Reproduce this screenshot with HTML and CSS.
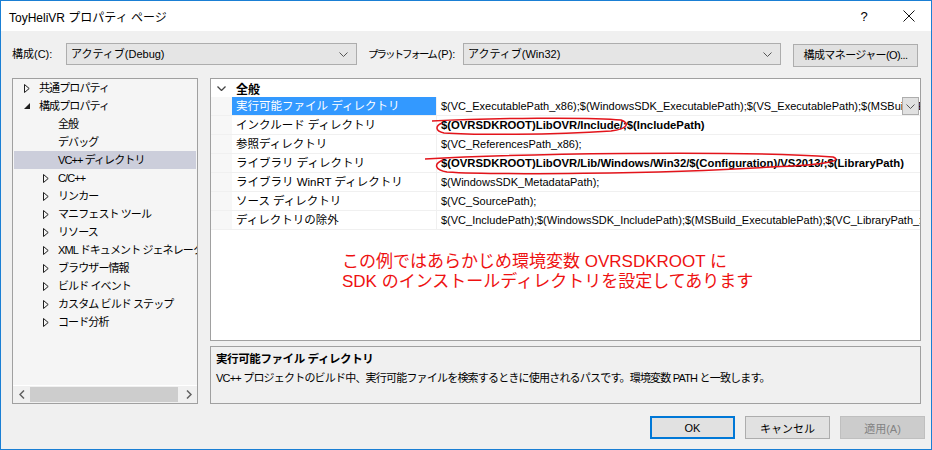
FILE: index.html
```html
<!DOCTYPE html>
<html lang="ja">
<head>
<meta charset="UTF-8"/>
<meta name="viewport" content="width=device-width, initial-scale=1.0"/>
<title>ToyHeliVR プロパティ ページ</title>
<link rel="stylesheet" href="styles.css">
</head>
<body>

<div class="window">

  <!-- TITLE BAR -->
  <div class="titlebar">
    <div class="title">ToyHeliVR プロパティ ページ</div>
    <div class="help">?</div>
    <div class="close">
      <svg width="12" height="12" viewBox="0 0 12 12"><path d="M0.5 0.5L11.5 11.5M11.5 0.5L0.5 11.5" stroke="#111" stroke-width="1"/></svg>
    </div>
  </div>

  <div class="content">

    <!-- CONFIG ROW -->
    <div class="config-row">
      <span class="label label-config">構成(C):</span>
      <div class="combo combo-config">
        <span>アクティブ(Debug)</span>
        <svg class="chev" width="9" height="5" viewBox="0 0 9 5"><path d="M0.5 0.5L4.5 4.5L8.5 0.5" fill="none" stroke="#555"/></svg>
      </div>
      <span class="label label-platform"><span class="kana">プラットフォーム</span>(P):</span>
      <div class="combo combo-platform">
        <span>アクティブ(Win32)</span>
        <svg class="chev" width="9" height="5" viewBox="0 0 9 5"><path d="M0.5 0.5L4.5 4.5L8.5 0.5" fill="none" stroke="#555"/></svg>
      </div>
      <button class="btn btn-manager">構成マネージャー(O)...</button>
    </div>

    <div class="main">

      <!-- TREE -->
      <div class="tree">
        <ul class="tree-list">
          <li class="node lvl1"><span class="twisty"><svg width="6" height="9" viewBox="0 0 6 9"><path d="M0.5 0.5L5.2 4.5L0.5 8.5Z" fill="none" stroke="#1e1e1e"/></svg></span>共通プロパティ</li>
          <li class="node lvl1"><span class="twisty"><svg width="6" height="6" viewBox="0 0 6 6"><path d="M6 0L6 6L0 6Z" fill="#1e1e1e"/></svg></span>構成プロパティ</li>
          <li class="node lvl2 leaf">全般</li>
          <li class="node lvl2 leaf">デバッグ</li>
          <li class="node lvl2 leaf selected">VC++ ディレクトリ</li>
          <li class="node lvl2"><span class="twisty"><svg width="6" height="9" viewBox="0 0 6 9"><path d="M0.5 0.5L5.2 4.5L0.5 8.5Z" fill="none" stroke="#1e1e1e"/></svg></span>C/C++</li>
          <li class="node lvl2"><span class="twisty"><svg width="6" height="9" viewBox="0 0 6 9"><path d="M0.5 0.5L5.2 4.5L0.5 8.5Z" fill="none" stroke="#1e1e1e"/></svg></span>リンカー</li>
          <li class="node lvl2"><span class="twisty"><svg width="6" height="9" viewBox="0 0 6 9"><path d="M0.5 0.5L5.2 4.5L0.5 8.5Z" fill="none" stroke="#1e1e1e"/></svg></span>マニフェスト ツール</li>
          <li class="node lvl2"><span class="twisty"><svg width="6" height="9" viewBox="0 0 6 9"><path d="M0.5 0.5L5.2 4.5L0.5 8.5Z" fill="none" stroke="#1e1e1e"/></svg></span>リソース</li>
          <li class="node lvl2"><span class="twisty"><svg width="6" height="9" viewBox="0 0 6 9"><path d="M0.5 0.5L5.2 4.5L0.5 8.5Z" fill="none" stroke="#1e1e1e"/></svg></span>XML ドキュメント ジェネレーター</li>
          <li class="node lvl2"><span class="twisty"><svg width="6" height="9" viewBox="0 0 6 9"><path d="M0.5 0.5L5.2 4.5L0.5 8.5Z" fill="none" stroke="#1e1e1e"/></svg></span>ブラウザー情報</li>
          <li class="node lvl2"><span class="twisty"><svg width="6" height="9" viewBox="0 0 6 9"><path d="M0.5 0.5L5.2 4.5L0.5 8.5Z" fill="none" stroke="#1e1e1e"/></svg></span>ビルド イベント</li>
          <li class="node lvl2"><span class="twisty"><svg width="6" height="9" viewBox="0 0 6 9"><path d="M0.5 0.5L5.2 4.5L0.5 8.5Z" fill="none" stroke="#1e1e1e"/></svg></span>カスタム ビルド ステップ</li>
          <li class="node lvl2"><span class="twisty"><svg width="6" height="9" viewBox="0 0 6 9"><path d="M0.5 0.5L5.2 4.5L0.5 8.5Z" fill="none" stroke="#1e1e1e"/></svg></span>コード分析</li>
        </ul>
        <div class="hscroll">
          <span class="sb-arrow"><svg width="6" height="9" viewBox="0 0 6 9"><path d="M5 0.5L1 4.5L5 8.5" fill="none" stroke="#606060" stroke-width="1.5"/></svg></span>
          <span class="sb-thumb"></span>
          <span class="sb-arrow"><svg width="6" height="9" viewBox="0 0 6 9"><path d="M1 0.5L5 4.5L1 8.5" fill="none" stroke="#606060" stroke-width="1.5"/></svg></span>
        </div>
      </div>

      <div class="right">

        <!-- PROPERTY GRID -->
        <div class="grid">
          <div class="grid-cat">
            <span class="cat-chev"><svg width="9" height="5" viewBox="0 0 9 5"><path d="M0.5 0.5L4.5 4.5L8.5 0.5" fill="none" stroke="#444" stroke-width="1.3"/></svg></span>
            <span class="cat-name">全般</span>
          </div>
          <div class="grid-row selected">
            <div class="gutter"></div>
            <div class="name">実行可能ファイル ディレクトリ</div>
            <div class="value">$(VC_ExecutablePath_x86);$(WindowsSDK_ExecutablePath);$(VS_ExecutablePath);$(MSBuild_ExecutablePath);$(FxCopDir);$(PATH);
              <span class="drop"><svg width="9" height="5" viewBox="0 0 9 5"><path d="M0.5 0.5L4.5 4.5L8.5 0.5" fill="none" stroke="#555"/></svg></span>
            </div>
          </div>
          <div class="grid-row">
            <div class="gutter"></div>
            <div class="name">インクルード ディレクトリ</div>
            <div class="value bold">$(OVRSDKROOT)LibOVR/Include/;$(IncludePath)</div>
          </div>
          <div class="grid-row">
            <div class="gutter"></div>
            <div class="name">参照ディレクトリ</div>
            <div class="value">$(VC_ReferencesPath_x86);</div>
          </div>
          <div class="grid-row">
            <div class="gutter"></div>
            <div class="name">ライブラリ ディレクトリ</div>
            <div class="value bold">$(OVRSDKROOT)LibOVR/Lib/Windows/Win32/$(Configuration)/VS2013/;$(LibraryPath)</div>
          </div>
          <div class="grid-row">
            <div class="gutter"></div>
            <div class="name">ライブラリ WinRT ディレクトリ</div>
            <div class="value">$(WindowsSDK_MetadataPath);</div>
          </div>
          <div class="grid-row">
            <div class="gutter"></div>
            <div class="name">ソース ディレクトリ</div>
            <div class="value">$(VC_SourcePath);</div>
          </div>
          <div class="grid-row">
            <div class="gutter"></div>
            <div class="name">ディレクトリの除外</div>
            <div class="value">$(VC_IncludePath);$(WindowsSDK_IncludePath);$(MSBuild_ExecutablePath);$(VC_LibraryPath_x86);</div>
          </div>

          <div class="note">
            <div>この例ではあらかじめ環境変数 OVRSDKROOT に</div>
            <div>SDK のインストールディレクトリを設定してあります</div>
          </div>

          <!-- hand-drawn red marks -->
          <svg class="marks" width="708" height="261" viewBox="0 0 708 261">
            <path d="M221 42 C280 39, 380 38, 410 41 C419 44, 417 50, 400 52 C340 56, 262 56, 233 54 C224 52, 224 47, 231 44" fill="none" stroke="#e3141b" stroke-width="1.5"/>
            <path d="M214 80 C300 75, 520 71, 622 78 C633 82, 612 86, 560 88 C450 95, 280 96, 236 93 C224 91, 222 85, 232 81" fill="none" stroke="#e3141b" stroke-width="1.5"/>
          </svg>
        </div>

        <!-- DESCRIPTION -->
        <div class="desc">
          <div class="desc-title">実行可能ファイル ディレクトリ</div>
          <div class="desc-text">VC++ プロジェクトのビルド中、実行可能ファイルを検索するときに使用されるパスです。環境変数 PATH と一致します。</div>
        </div>
      </div>
    </div>

    <!-- BUTTONS -->
    <div class="buttons">
      <button class="btn btn-ok">OK</button>
      <button class="btn">キャンセル</button>
      <button class="btn btn-disabled">適用(A)</button>
    </div>

  </div>
</div>

</body>
</html>
```

FILE: styles.css
```css
/* GLOBAL */
html,body {
  margin:0; padding:0; background:#f0f0f0; overflow:hidden;
  font-family:"Liberation Sans","Noto Sans CJK JP",sans-serif; font-size:11px; color:#000;
}
:root {
  --accent:#1a7fd4;
  --panel-border:#a0a0a0;
  --ctrl-bg:#e1e1e1;
  --ctrl-border:#adadad;
}
.window {
  width:930px; height:448px; border:1px solid var(--accent); background:#f0f0f0;
  display:flex; flex-direction:column; overflow:hidden;
}

/* TITLE BAR */
.titlebar {
  height:30px; background:#fff; display:flex; align-items:center; flex-shrink:0;
}
.title {flex:1; padding-left:8px; font-size:12px;}
.help {width:14px; font-size:13px; margin-right:32px; text-align:center;}
.close {width:12px; height:12px; margin-right:16px; display:flex;}

/* CONTENT */
.content {flex:1; display:flex; flex-direction:column; min-width:0;}
.config-row {
  display:flex; align-items:flex-start; padding:12px 0 0 11px; height:22px; line-height:22px;
}
.label {white-space:nowrap; flex:none;}
.label-config {width:54px;}
.label-platform {width:95px; margin-left:11px;}
.label-platform .kana {font-size:10.5px; letter-spacing:-2px; margin-right:2px;}
.combo {
  height:20px; border:1px solid var(--ctrl-border); background:#e5e5e5; flex:none;
  display:flex; align-items:center; justify-content:space-between; padding:0 8px 0 4px; line-height:20px;
  box-sizing:content-box;
}
.combo-config {width:277px;}
.combo-platform {width:304px;}
.btn {
  font-family:inherit; font-size:11px; color:#000; background:var(--ctrl-bg);
  border:1px solid var(--ctrl-border); padding:0; height:23px; width:85px; cursor:pointer; white-space:nowrap;
}
.btn-manager {width:125px; margin-left:12px; margin-top:1px; line-height:21px; letter-spacing:-0.6px;}

.main {display:flex; margin:13px 10px 0 11px; height:326px; gap:12px; min-width:0;}

/* TREE */
.tree {
  width:186px; height:326px; box-sizing:border-box; flex-shrink:0;
  border:1px solid var(--panel-border); background:#f5f5f5;
  display:flex; flex-direction:column;
}
.tree-list {list-style:none; margin:0; padding:0; flex:1 1 auto; min-height:0; overflow:hidden;}
.node {
  height:18px; line-height:18px; white-space:nowrap; position:relative; margin:0 1px;
  font-size:11px; letter-spacing:-0.9px;
}
.node.lvl1 {padding-left:25px;}
.node.lvl2 {padding-left:44px;}
.node.selected {background:#cccedb;}
.twisty {
  position:absolute; top:0; height:18px; width:8px; display:flex; align-items:center; justify-content:center;
}
.lvl1 .twisty {left:9px;}
.lvl2 .twisty {left:28px;}
.hscroll {
  flex:0 0 17px; height:17px; background:#f0f0f0; border-top:1px solid #ffffff;
  display:flex; align-items:center;
}
.sb-arrow {width:17px; height:17px; display:flex; align-items:center; justify-content:center; flex:none;}
.sb-thumb {display:block; flex:1 1 auto; height:15px; background:#cdcdcd; margin-right:2px;}

/* RIGHT */
.right {flex:1; min-width:0; display:flex; flex-direction:column; gap:5px;}
.grid {
  height:261px; flex:none; border:1px solid var(--panel-border); background:#fff; position:relative; overflow:hidden;
}
.grid-cat {height:18px; display:flex; align-items:center; background:#fff;}
.cat-chev {width:21px; display:flex; justify-content:center; margin-top:1px;}
.cat-name {font-weight:bold; font-size:12px; padding-left:4px;}
.grid-row {
  height:18px; display:flex; border-bottom:1px solid #f0f0f0; line-height:18px;
}
.grid-row:first-of-type {border-top:1px solid #f0f0f0;}
.gutter {width:21px; background:#f7f7f7; flex-shrink:0;}
.name {
  width:200px; padding-left:4px; border-right:1px solid #f0f0f0; flex-shrink:0; white-space:nowrap; overflow:hidden;
  font-size:11.5px;
}
.value {flex:1; min-width:0; padding-left:4px; white-space:nowrap; overflow:hidden; position:relative;}
.value.bold {font-weight:bold; font-size:11.3px;}
.grid-row.selected .name {background:#3399ff; color:#fff;}
.drop {
  position:absolute; right:1px; top:0; width:15px; height:16px; background:var(--ctrl-bg);
  border:1px solid var(--ctrl-border); display:flex; align-items:center; justify-content:center;
}
.note {
  color:#ee1111; font-size:17px; line-height:20px; padding:22px 0 0 131px; white-space:nowrap;
}
.marks {position:absolute; left:0; top:0; pointer-events:none;}

/* DESCRIPTION */
.desc {
  flex:1; border:1px solid var(--panel-border); background:#f0f0f0; padding:2px 5px;
}
.desc-title {font-weight:bold; line-height:20px; font-size:11.5px; letter-spacing:-0.4px;}
.desc-text {line-height:18px; letter-spacing:-0.8px;}

/* BUTTONS */
.buttons {display:flex; justify-content:flex-end; gap:10px; margin:12px 6px 0 0;}
.btn-ok {border:2px solid #0078d7;}
.btn-disabled {background:#cccccc; border-color:#bfbfbf; color:#838383;}
```
